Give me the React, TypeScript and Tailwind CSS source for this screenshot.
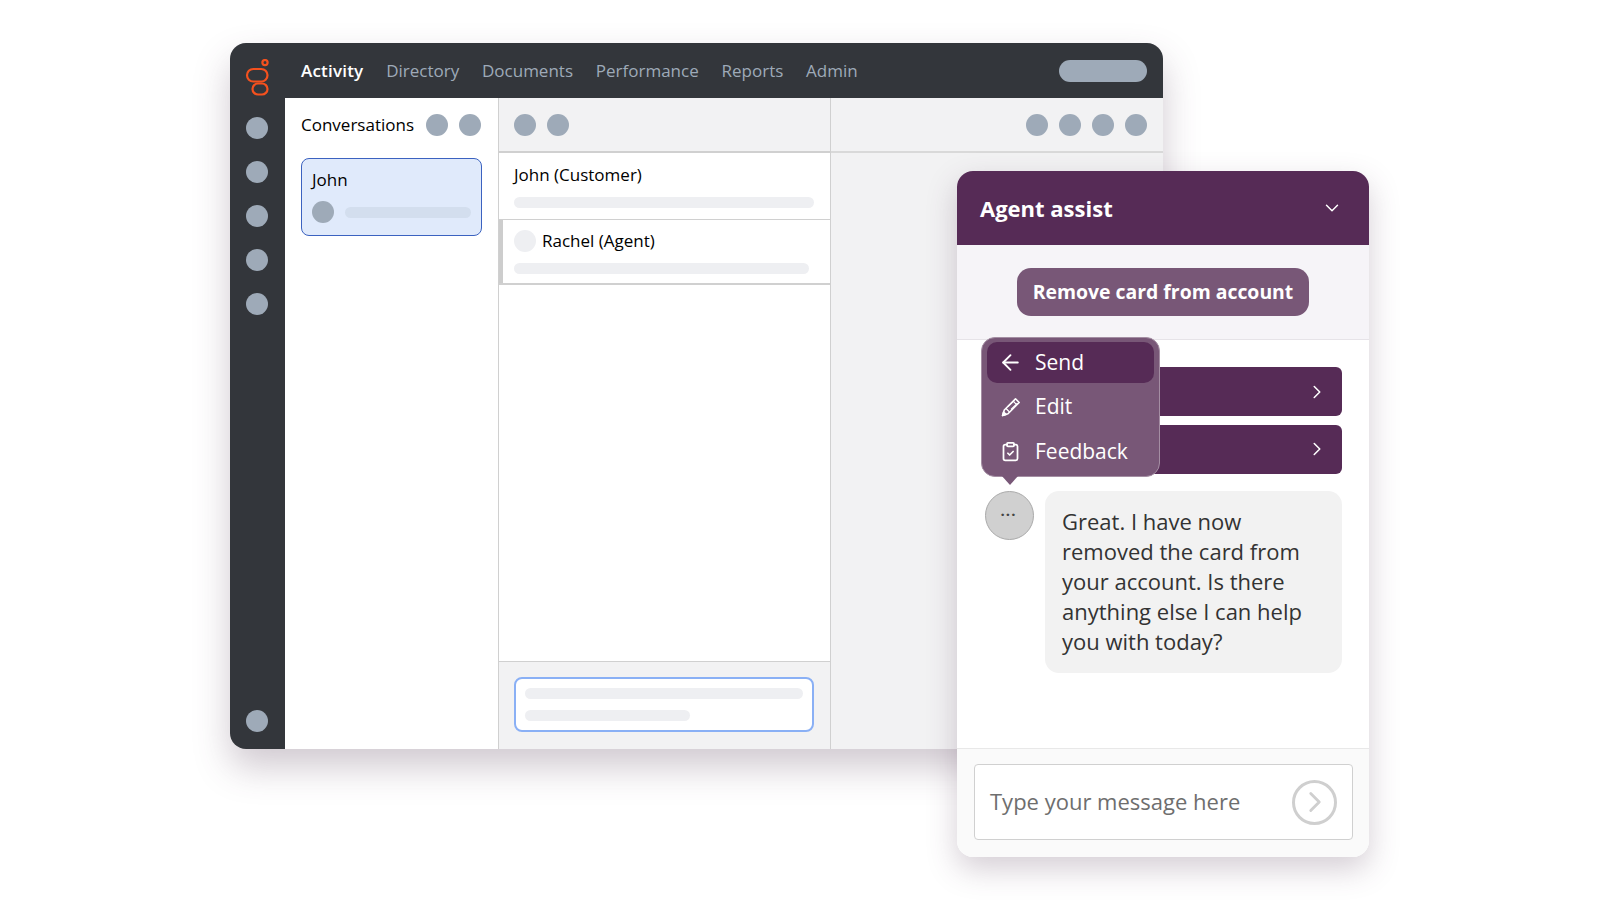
import React from 'react'
import { ArrowLeft, ChevronDown, ChevronRight, ClipboardCheck } from 'lucide-react'

const Dot = ({ light = false }: { light?: boolean }) => (
  <div className={light ? 'w-[22px] h-[22px] rounded-full bg-[#eeeff2] shrink-0' : 'w-[22px] h-[22px] rounded-full bg-[#9eaab8] shrink-0'} />
)

const Bar = ({ className }: { className: string }) => <div className={`h-[11px] rounded-full ${className}`} />

const Logo = () => (
  <svg width="26" height="40" viewBox="0 0 26 40" fill="none" stroke="#f4511e" strokeWidth="2.2">
    <circle cx="20" cy="3.6" r="2.6" />
    <rect x="2" y="10" width="20.5" height="12.5" rx="6.25" />
    <rect x="7.5" y="24.5" width="15" height="11" rx="5.5" />
  </svg>
)

const PencilIcon = () => (
  <svg width="20" height="20" viewBox="0 0 20 20" fill="none" stroke="white" strokeWidth="1.6" strokeLinejoin="round">
    <path d="M14.5 1.8 18.2 5.5 7 16.7 1.6 18.4 3.3 13Z" />
    <path d="M12.2 4.2 15.8 7.8M5 11.5 8.5 15M7 9.5 13.5 3.2M10 12.5 16.5 6.2" strokeWidth="1.2" />
    <path d="M1.6 18.4 2.6 15 5 17.4Z" fill="white" />
  </svg>
)

const App = () => {
  const navItems = ['Directory', 'Documents', 'Performance', 'Reports', 'Admin']

  return (
    <div className="relative w-[1600px] h-[900px] bg-white overflow-hidden pt-[43px] pl-[230px] font-['Open_Sans',sans-serif]">
      {/* main desktop window */}
      <div className="flex flex-col w-[933px] h-[706px] rounded-[16px] overflow-hidden bg-[#f2f2f3] shadow-[0_18px_36px_rgba(86,60,86,0.28)]">
        <div className="flex items-center h-[55px] bg-[#33363b] shrink-0 pr-[16px]">
          <div className="flex justify-center w-[55px] pt-[17px]">
            <Logo />
          </div>
          <div className="flex items-center gap-[22.8px] pl-[16px] text-[17px]">
            <span className="text-white font-semibold tracking-[0.2px]">Activity</span>
            {navItems.map((item) => (
              <span key={item} className="text-[#9eaab8]">{item}</span>
            ))}
          </div>
          <div className="ml-auto w-[88px] h-[22px] rounded-full bg-[#9eaab8]" />
        </div>

        <div className="flex flex-1 min-h-0">
          <div className="flex flex-col items-center w-[55px] bg-[#33363b] pt-[19px] pb-[17px] pr-[1px] gap-[22px] shrink-0">
            <Dot />
            <Dot />
            <Dot />
            <Dot />
            <Dot />
            <div className="mt-auto">
              <Dot />
            </div>
          </div>

          <div className="w-[213px] bg-white shrink-0 pl-[16px] pr-[16px] pt-[16px]">
            <div className="flex items-center h-[22px] pr-[1px]">
              <span className="text-[17px] text-black">Conversations</span>
              <div className="ml-auto flex gap-[11px]">
                <Dot />
                <Dot />
              </div>
            </div>
            <div className="mt-[22px] h-[78px] rounded-[8px] border border-[#3b62c0] bg-[#e0eafb] px-[10px] pt-[9px]">
              <div className="text-[17px] leading-[24px] text-black">John</div>
              <div className="flex items-center gap-[11px] mt-[9px]">
                <Dot />
                <Bar className="flex-1 bg-[#d3deee]" />
              </div>
            </div>
          </div>

          <div className="flex flex-col w-[333px] shrink-0 border-x-[1.5px] border-[#d0d0d0]">
            <div className="flex items-center gap-[11px] h-[55px] px-[15px] bg-[#f2f2f3] border-b-2 border-[#d0d0d0] shrink-0">
              <Dot />
              <Dot />
            </div>
            <div className="h-[67px] bg-white border-b-[1.5px] border-[#d0d0d0] px-[15px] pt-[10px] shrink-0">
              <div className="text-[17px] leading-[24px] text-black">John (Customer)</div>
              <Bar className="mt-[10px] w-[300px] bg-[#eeeff2]" />
            </div>
            <div className="h-[65px] bg-white border-b-2 border-[#d0d0d0] shrink-0 flex">
              <div className="w-[4px] bg-[#cdcdcd]" />
              <div className="pl-[11px] pt-[10px]">
                <div className="flex items-center gap-[6px] h-[22px]">
                  <Dot light />
                  <span className="text-[17px] text-black">Rachel (Agent)</span>
                </div>
                <Bar className="mt-[11px] w-[295px] bg-[#eeeff2]" />
              </div>
            </div>
            <div className="flex-1 bg-white" />
            <div className="h-[88px] bg-[#f2f2f3] border-t-[1.5px] border-[#d0d0d0] px-[15px] pt-[15px] shrink-0">
              <div className="flex flex-col gap-[11px] w-[300px] h-[55px] rounded-[8px] border-2 border-[#8ab0f5] bg-white px-[9px] pt-[9px]">
                <Bar className="w-full bg-[#eeeff2]" />
                <Bar className="w-[165px] bg-[#eeeff2]" />
              </div>
            </div>
          </div>

          <div className="flex-1 bg-[#f2f2f3]">
            <div className="flex items-center justify-end gap-[11px] h-[55px] pr-[16px] border-b-2 border-[#d9d9d9]">
              <Dot />
              <Dot />
              <Dot />
              <Dot />
            </div>
          </div>
        </div>
      </div>

      {/* agent assist panel, sits over the window */}
      <div className="absolute left-[957px] top-[171px] flex flex-col w-[412px] h-[686px] rounded-[16px] overflow-hidden bg-white shadow-[0_12px_30px_rgba(86,60,86,0.25)]">
        <div className="flex items-center justify-between h-[74px] bg-[#562b56] pl-[23px] pr-[26px] shrink-0">
          <span className="text-[22px] font-bold text-white">Agent assist</span>
          <ChevronDown size={22} color="white" strokeWidth={1.6} />
        </div>
        <div className="flex items-center justify-center h-[95px] bg-[#f6f4f8] border-b-[1.5px] border-[#e6e3e8] shrink-0">
          <div className="flex items-center justify-center w-[292px] h-[48px] rounded-[14px] bg-[#785777] text-[19.4px] font-bold text-white">
            Remove card from account
          </div>
        </div>
        <div className="flex-1 pl-[28px] pr-[27px] pt-[27px]">
          <div className="flex flex-col gap-[8.5px] pl-[150px]">
            <div className="flex items-center justify-end h-[49px] bg-[#562b56] rounded-r-[6px] pr-[14px]">
              <ChevronRight size={22} color="white" strokeWidth={1.7} />
            </div>
            <div className="flex items-center justify-end h-[49px] bg-[#562b56] rounded-r-[6px] pr-[14px]">
              <ChevronRight size={22} color="white" strokeWidth={1.7} />
            </div>
          </div>
          <div className="flex gap-[11px] mt-[17px]">
            <div className="flex items-center justify-center w-[49px] h-[49px] rounded-full bg-[#d0d0d0] border border-[#aaaaaa] shrink-0 text-[#444] text-[15px] font-bold leading-none tracking-[1px] pb-[9px] pr-[2px]">
              ...
            </div>
            <div className="w-[297px] h-[182px] rounded-[14px] bg-[#f2f2f2] pl-[17px] pr-[30px] pt-[15px] text-[22px] leading-[30px] text-[#333]">
              Great. I have now removed the card from your account. Is there anything else I can help you with today?
            </div>
          </div>
        </div>
        <div className="h-[109px] bg-[#fafafa] border-t-[1.5px] border-[#e8e8e8] px-[17px] pt-[15px] shrink-0">
          <div className="flex items-center justify-between h-[76px] w-[379px] rounded-[4px] border-[1.5px] border-[#d0d0d0] bg-white pl-[15px] pr-[15px]">
            <span className="text-[22px] text-[#6e6e6e] pb-[2px]">Type your message here</span>
            <div className="flex items-center justify-center w-[45px] h-[45px] rounded-full border-[3px] border-[#cfcfcf]">
              <ChevronRight size={34} color="#cfcfcf" strokeWidth={2} />
            </div>
          </div>
        </div>
      </div>

      {/* popup menu */}
      <div className="absolute left-[981px] top-[337px] w-[179px] h-[140px] rounded-[14px] bg-[#785777] border border-[#a48ea3] px-[5px] pt-[4px] text-[21px] text-white">
        <div className="flex items-center h-[41px] rounded-[10px] bg-[#562b56] pl-[11px] gap-[12px]">
          <ArrowLeft size={25} color="white" strokeWidth={1.8} />
          <span>Send</span>
        </div>
        <div className="flex items-center h-[45px] mt-[1px] pl-[11px] gap-[12px]">
          <div className="w-[25px] flex justify-center"><PencilIcon /></div>
          <span>Edit</span>
        </div>
        <div className="flex items-center h-[45px] pl-[11px] gap-[12px]">
          <div className="w-[25px] flex justify-center"><ClipboardCheck size={21} color="white" strokeWidth={2} /></div>
          <span>Feedback</span>
        </div>
        <div className="absolute left-[19px] top-[137px] w-0 h-0 border-x-[9px] border-x-transparent border-t-[10px] border-t-[#785777]" />
      </div>
    </div>
  )
}

export default App
